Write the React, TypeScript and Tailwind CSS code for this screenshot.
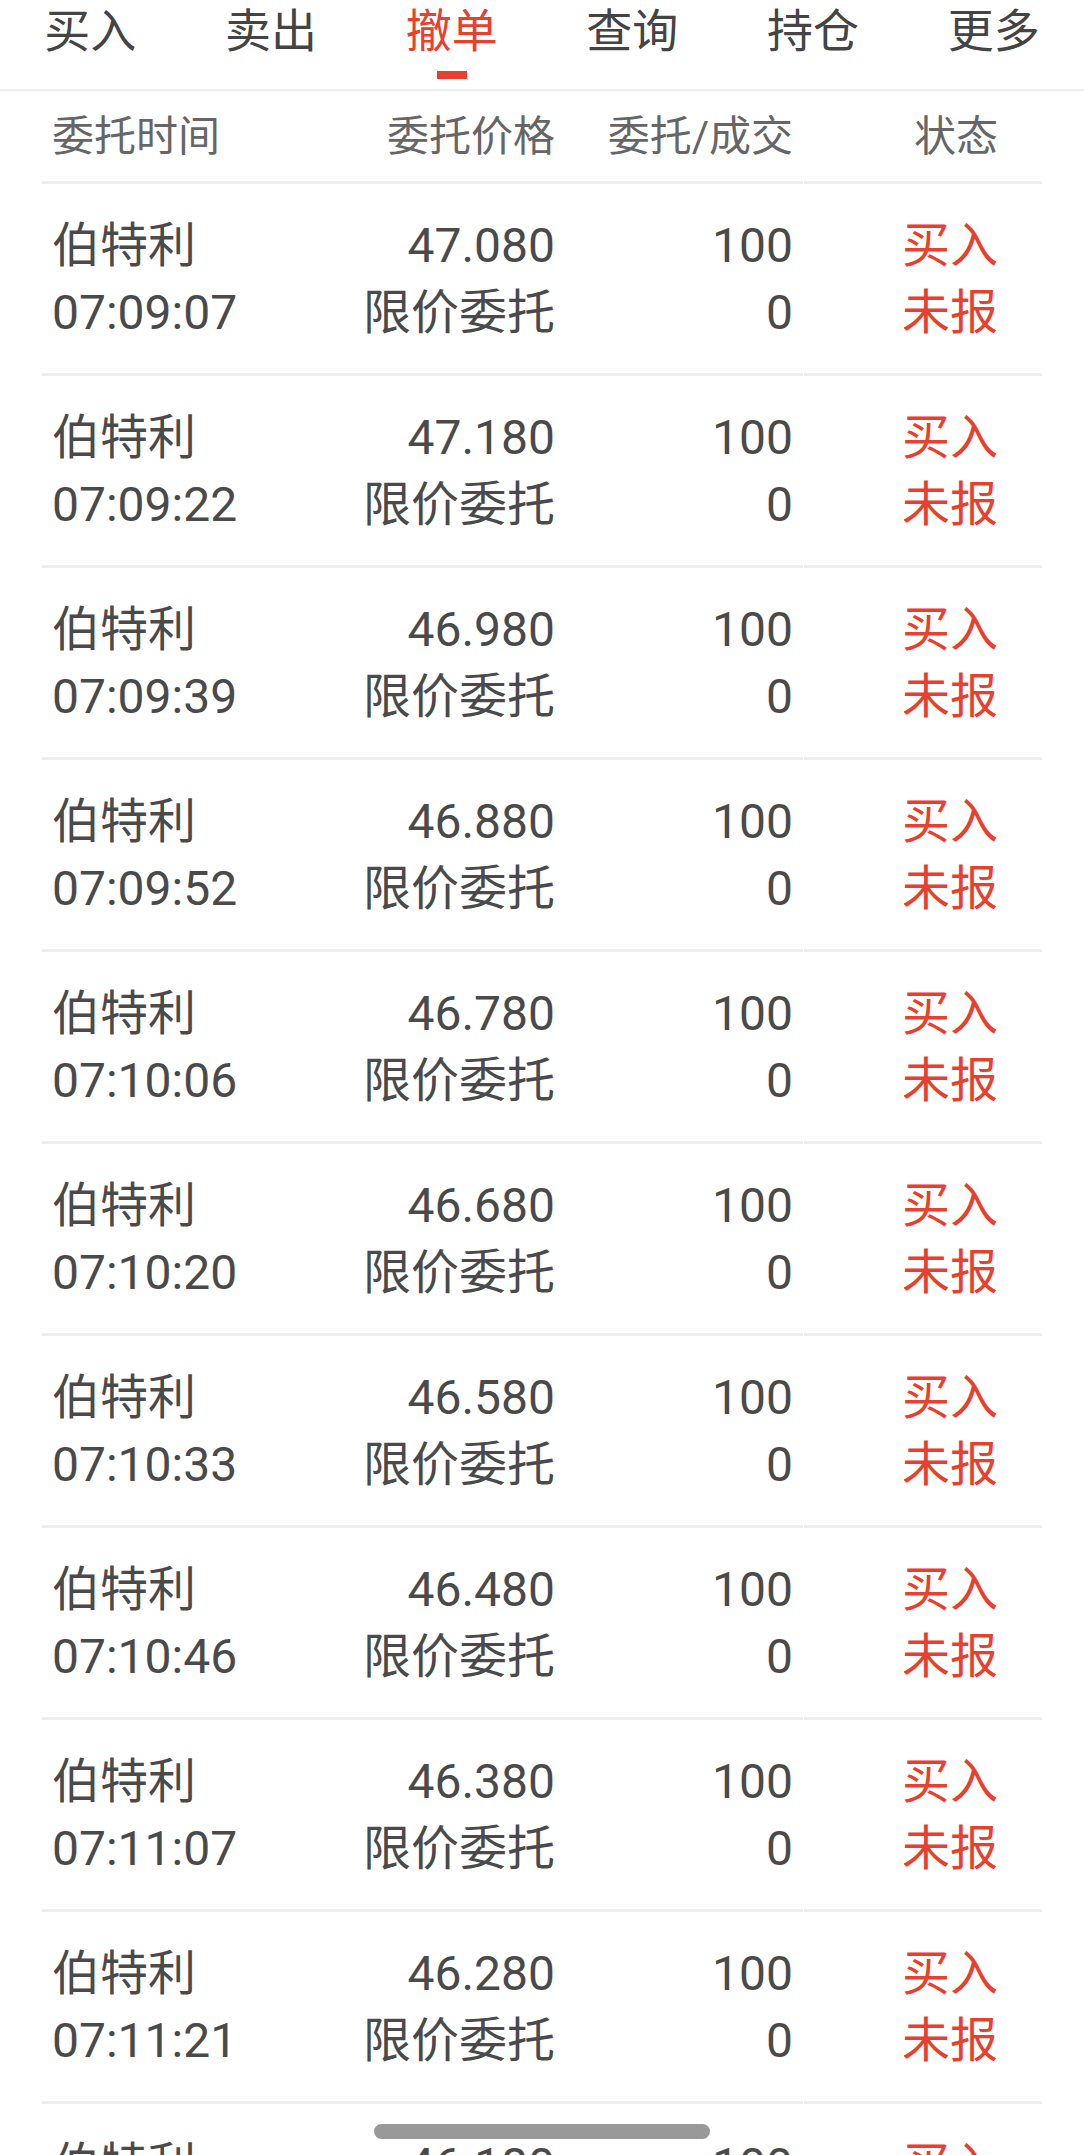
import * as React from 'react';

const tabs = ['买入', '卖出', '撤单', '查询', '持仓', '更多'];

type Order = { time: string; price: string };

const orders: Order[] = [
  { time: '07:09:07', price: '47.080' },
  { time: '07:09:22', price: '47.180' },
  { time: '07:09:39', price: '46.980' },
  { time: '07:09:52', price: '46.880' },
  { time: '07:10:06', price: '46.780' },
  { time: '07:10:20', price: '46.680' },
  { time: '07:10:33', price: '46.580' },
  { time: '07:10:46', price: '46.480' },
  { time: '07:11:07', price: '46.380' },
  { time: '07:11:21', price: '46.280' },
  { time: '07:11:35', price: '46.180' },
];

const font = { fontFamily: 'Roboto, "Noto Sans CJK SC", sans-serif' };

function TabBar() {
  return (
    <div className="flex h-[91px] border-b-2 border-[#eeeeee]">
      {tabs.map((t, i) => {
        const active = i === 2;
        return (
          <div key={t} className="flex flex-1 flex-col items-center">
            <span
              className={
                'text-[46px] leading-[62px] ' + (active ? 'text-[#e8402f]' : 'text-[#444444]')
              }
            >
              {t}
            </span>
            {active && <span className="mt-[9px] h-[8px] w-[30px] bg-[#e8402f]" />}
          </div>
        );
      })}
    </div>
  );
}

function Cells({
  a,
  b,
  c,
  d,
  className,
}: {
  a: React.ReactNode;
  b: React.ReactNode;
  c: React.ReactNode;
  d: React.ReactNode;
  className: string;
}) {
  return (
    <div className={'mx-[42px] flex ' + className}>
      <div className="flex w-[761px] items-center border-b-[3px] border-[#eeeeee]">
        <div className="w-[260px] whitespace-nowrap pl-[10px]">{a}</div>
        <div className="w-[263px] whitespace-nowrap pr-[10px] text-right">{b}</div>
        <div className="w-[238px] whitespace-nowrap pr-[10px] text-right">{c}</div>
      </div>
      <div className="ml-px flex w-[238px] items-center justify-end whitespace-nowrap border-b-[3px] border-[#eeeeee] pr-[44px] text-right">
        {d}
      </div>
    </div>
  );
}

export default function App() {
  return (
    <div className="relative h-[2155px] overflow-hidden bg-white" style={font}>
      <TabBar />
      <Cells
        className="h-[93px] text-[42px] text-[#666666]"
        a="委托时间"
        b="委托价格"
        c="委托/成交"
        d="状态"
      />
      {orders.map((o) => (
        <Cells
          key={o.time}
          className="h-[192px] text-[48px] leading-[67px] text-[#4a4a4a]"
          a={
            <>
              <div>伯特利</div>
              <div>{o.time}</div>
            </>
          }
          b={
            <>
              <div>{o.price}</div>
              <div>限价委托</div>
            </>
          }
          c={
            <>
              <div>100</div>
              <div>0</div>
            </>
          }
          d={
            <div className="text-[#e8402f]">
              <div>买入</div>
              <div>未报</div>
            </div>
          }
        />
      ))}
      <div className="absolute left-[374px] top-[2124px] h-[15px] w-[336px] rounded-full bg-[#999999]" />
    </div>
  );
}
